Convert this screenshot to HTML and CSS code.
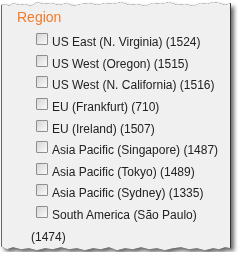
FILE: index.html
```html
<!DOCTYPE html>
<html lang="en">

<head>
    <meta charset="UTF-8">
    <meta name="viewport" content="width=device-width, initial-scale=1.0">
    <title>Region Filter</title>
    <link rel="stylesheet" href="styles.css">
</head>

<body>
    <div class="frame">
        <div class="panel">
            <h3 class="filter-title">Region</h3>
            <div class="filter-list">
                <label class="filter-item"><input type="checkbox">US East (N. Virginia) (1524)</label>
                <label class="filter-item"><input type="checkbox">US West (Oregon) (1515)</label>
                <label class="filter-item"><input type="checkbox">US West (N. California) (1516)</label>
                <label class="filter-item"><input type="checkbox">EU (Frankfurt) (710)</label>
                <label class="filter-item"><input type="checkbox">EU (Ireland) (1507)</label>
                <label class="filter-item"><input type="checkbox">Asia Pacific (Singapore) (1487)</label>
                <label class="filter-item"><input type="checkbox">Asia Pacific (Tokyo) (1489)</label>
                <label class="filter-item"><input type="checkbox">Asia Pacific (Sydney) (1335)</label>
                <label class="filter-item"><input type="checkbox">South America (São Paulo) (1474)</label>
            </div>
        </div>
    </div>
</body>

</html>
```

FILE: styles.css
```css
body {
    font-family: "Liberation Sans", Arial, sans-serif;
    margin: 0;
    padding: 0;
    background-color: #fff;
}

.frame {
    width: 230px;
    margin-left: 1px;
    filter: drop-shadow(0 0 0.6px #222) drop-shadow(3px 3px 2px rgba(0, 0, 0, 0.6));
}

.panel {
    background-color: #f0f0f0;
    border-left: 1px solid #666;
    border-right: 1px solid #333;
    padding: 8.5px 4px 4px 15px;
    clip-path: polygon(0 5px, 5px 4px, 8px 6px, 12px 3px, 18px 5px, 24px 4px, 30px 6px, 36px 2px, 42px 4px, 50px 3px,
        58px 5px, 66px 3px, 72px 6px, 80px 4px, 88px 3px, 96px 5px, 104px 3px, 112px 4px, 120px 2px, 128px 5px,
        136px 4px, 144px 6px, 152px 3px, 160px 4px, 168px 2px, 176px 5px, 184px 4px, 192px 6px, 200px 3px,
        206px 4px, 212px 2px, 218px 3px, 224px 5px, 230px 3px,
        230px calc(100% - 4px), 224px calc(100% - 5px), 218px calc(100% - 3px), 212px calc(100% - 4px),
        204px calc(100% - 2px), 196px calc(100% - 4px), 188px calc(100% - 3px), 180px calc(100% - 5px),
        172px calc(100% - 4px), 164px calc(100% - 2px), 156px calc(100% - 4px), 148px calc(100% - 3px),
        140px calc(100% - 5px), 132px calc(100% - 3px), 124px calc(100% - 4px), 116px calc(100% - 2px),
        108px calc(100% - 5px), 100px calc(100% - 3px), 92px calc(100% - 4px), 84px calc(100% - 2px),
        76px calc(100% - 4px), 68px calc(100% - 3px), 60px calc(100% - 5px), 52px calc(100% - 3px),
        44px calc(100% - 4px), 36px calc(100% - 2px), 28px calc(100% - 4px), 20px calc(100% - 3px),
        12px calc(100% - 5px), 6px calc(100% - 3px), 0 calc(100% - 6px));
}

.filter-title {
    margin: 0 0 7.8px 0;
    font-size: 14px;
    line-height: 16px;
    font-weight: normal;
    color: #f37b2b;
}

.filter-list {
    margin-left: 14px;
}

.filter-item {
    display: block;
    font-size: 12px;
    line-height: 21.6px;
    color: #222;
}

.filter-item input {
    appearance: none;
    width: 12px;
    height: 12px;
    margin: 0 4px 0 5px;
    vertical-align: 1px;
    border: 1px solid #8e8e8e;
    border-radius: 1px;
    background: linear-gradient(135deg, #d6d6d6, #fafafa);
}
```
